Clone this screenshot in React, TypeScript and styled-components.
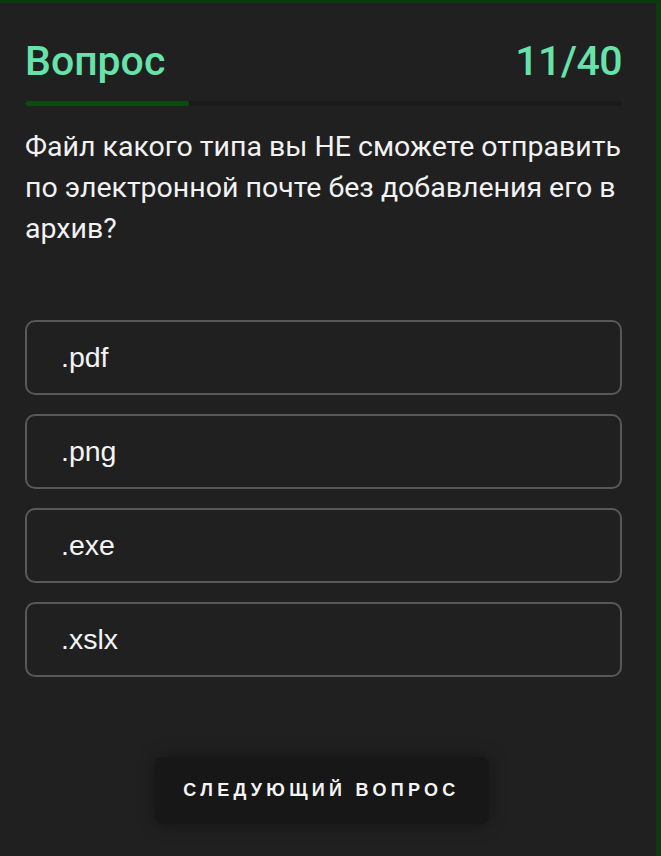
import styled, { createGlobalStyle } from 'styled-components';

const GlobalStyle = createGlobalStyle`
  html, body {
    margin: 0;
    padding: 0;
    background: #202020;
  }
  * {
    box-sizing: border-box;
  }
`;

const Page = styled.div`
  width: 661px;
  height: 856px;
  background: #202020;
  border-top: 3px solid #0b3a0e;
  border-right: 5px solid #0d3a11;
  padding: 36px 34px 0 25px;
  display: flex;
  flex-direction: column;
`;

const Header = styled.div`
  display: flex;
  justify-content: space-between;
  align-items: center;
`;

const Title = styled.h1`
  margin: 0;
  font-family: Roboto, 'Noto Sans', sans-serif;
  font-weight: 500;
  font-size: 41px;
  line-height: 44px;
  color: #66e2aa;
`;

const Counter = styled(Title)`
  letter-spacing: -0.5px;
`;

const Track = styled.div`
  margin-top: 18px;
  height: 5px;
  border-radius: 3px;
  background: #1a1a1a;
  overflow: hidden;
`;

const Fill = styled.div`
  height: 100%;
  border-radius: 3px;
  background: #0c4a12;
`;

const Question = styled.p`
  margin: 20px 0 0 0;
  font-family: Roboto, 'Noto Sans', sans-serif;
  font-size: 28.5px;
  line-height: 41px;
  color: #f2f2f2;
`;

const Options = styled.div`
  margin-top: 71px;
  display: flex;
  flex-direction: column;
  gap: 19px;
`;

const Option = styled.button`
  height: 75px;
  width: 100%;
  display: flex;
  align-items: center;
  padding: 0 34px;
  background: transparent;
  border: 2px solid #585858;
  border-radius: 10px;
  font-family: 'Liberation Sans', Arial, sans-serif;
  font-size: 28.5px;
  color: #f4f4f4;
  text-align: left;
  cursor: pointer;
`;

const Footer = styled.div`
  margin-top: 80px;
  display: flex;
  justify-content: center;
`;

const NextButton = styled.button`
  width: 334px;
  height: 67px;
  margin-left: -4px;
  background: #171717;
  border: none;
  border-radius: 8px;
  box-shadow: 0 0 18px rgba(0, 0, 0, 0.35);
  font-family: 'Liberation Sans', Arial, sans-serif;
  font-weight: 700;
  font-size: 18px;
  letter-spacing: 4.3px;
  color: #f4f4f4;
  text-transform: uppercase;
  cursor: pointer;
`;

const answers = ['.pdf', '.png', '.exe', '.xslx'];
const current = 11;
const total = 40;

export default function App() {
  return (
    <>
      <GlobalStyle />
      <Page>
        <Header>
          <Title>Вопрос</Title>
          <Counter>
            {current}/{total}
          </Counter>
        </Header>
        <Track>
          <Fill style={{ width: `${(current / total) * 100}%` }} />
        </Track>
        <Question>
          Файл какого типа вы НЕ сможете отправить по электронной почте без
          добавления его в архив?
        </Question>
        <Options>
          {answers.map((a) => (
            <Option key={a}>{a}</Option>
          ))}
        </Options>
        <Footer>
          <NextButton>Следующий вопрос</NextButton>
        </Footer>
      </Page>
    </>
  );
}
